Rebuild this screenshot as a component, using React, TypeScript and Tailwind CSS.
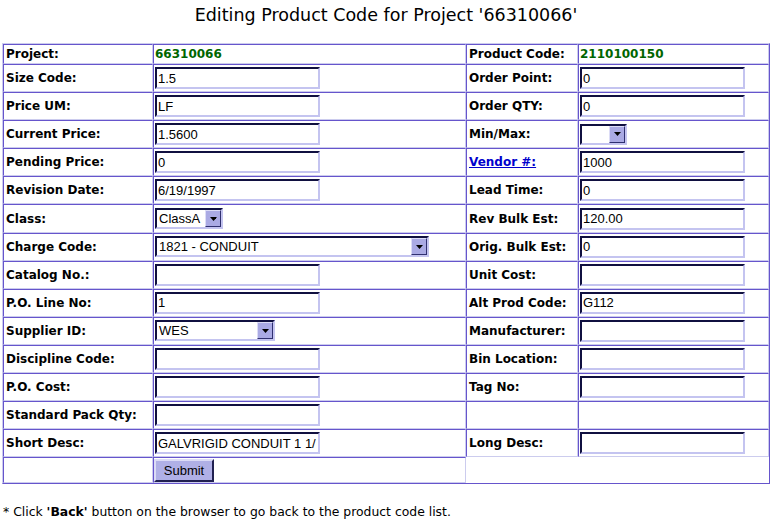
const DARK = 'border-t-[#6655cc] border-l-[#6655cc] border-b-[#ccccee] border-r-[#ccccee]';

type Field =
  | { kind: 'text'; value: string }
  | { kind: 'input'; value: string }
  | { kind: 'select'; value: string; width: string }
  | { kind: 'none' };

type Row = {
  left: string;
  leftField: Field;
  right?: string;
  rightLink?: boolean;
  rightField?: Field;
};

const ROWS: Row[] = [
  { left: 'Project:', leftField: { kind: 'text', value: '66310066' }, right: 'Product Code:', rightField: { kind: 'text', value: '2110100150' } },
  { left: 'Size Code:', leftField: { kind: 'input', value: '1.5' }, right: 'Order Point:', rightField: { kind: 'input', value: '0' } },
  { left: 'Price UM:', leftField: { kind: 'input', value: 'LF' }, right: 'Order QTY:', rightField: { kind: 'input', value: '0' } },
  { left: 'Current Price:', leftField: { kind: 'input', value: '1.5600' }, right: 'Min/Max:', rightField: { kind: 'select', value: '', width: 'w-[47px]' } },
  { left: 'Pending Price:', leftField: { kind: 'input', value: '0' }, right: 'Vendor #:', rightLink: true, rightField: { kind: 'input', value: '1000' } },
  { left: 'Revision Date:', leftField: { kind: 'input', value: '6/19/1997' }, right: 'Lead Time:', rightField: { kind: 'input', value: '0' } },
  { left: 'Class:', leftField: { kind: 'select', value: 'ClassA', width: 'w-[68px]' }, right: 'Rev Bulk Est:', rightField: { kind: 'input', value: '120.00' } },
  { left: 'Charge Code:', leftField: { kind: 'select', value: '1821 - CONDUIT', width: 'w-[274px]' }, right: 'Orig. Bulk Est:', rightField: { kind: 'input', value: '0' } },
  { left: 'Catalog No.:', leftField: { kind: 'input', value: '' }, right: 'Unit Cost:', rightField: { kind: 'input', value: '' } },
  { left: 'P.O. Line No:', leftField: { kind: 'input', value: '1' }, right: 'Alt Prod Code:', rightField: { kind: 'input', value: 'G112' } },
  { left: 'Supplier ID:', leftField: { kind: 'select', value: 'WES', width: 'w-[120px]' }, right: 'Manufacturer:', rightField: { kind: 'input', value: '' } },
  { left: 'Discipline Code:', leftField: { kind: 'input', value: '' }, right: 'Bin Location:', rightField: { kind: 'input', value: '' } },
  { left: 'P.O. Cost:', leftField: { kind: 'input', value: '' }, right: 'Tag No:', rightField: { kind: 'input', value: '' } },
  { left: 'Standard Pack Qty:', leftField: { kind: 'input', value: '' }, right: '', rightField: { kind: 'none' } },
  { left: 'Short Desc:', leftField: { kind: 'input', value: 'GALVRIGID CONDUIT 1 1/' }, right: 'Long Desc:', rightField: { kind: 'input', value: '' } },
];

function TextBox({ value }: { value: string }) {
  return (
    <input
      type="text"
      defaultValue={value}
      className="block w-[165px] h-[22px] px-[1px] border-2 border-t-[#101040] border-l-[#101040] border-b-[#c4c4f0] border-r-[#c4c4f0] bg-white text-[13px] text-black outline-none font-['Liberation_Sans',Arial,sans-serif]"
    />
  );
}

function DropDown({ value, width }: { value: string; width: string }) {
  return (
    <div className={`flex items-center h-[21px] ${width} border-2 border-t-[#101040] border-l-[#101040] border-b-[#c4c4f0] border-r-[#c4c4f0] bg-white`}>
      <span className="flex-1 pl-[2px] text-[13px] leading-none text-black whitespace-nowrap overflow-hidden font-['Liberation_Sans',Arial,sans-serif]">
        {value}
      </span>
      <span className="flex items-center justify-center w-[16px] h-[17px] bg-[#aaaae4] border border-t-[#dcdcf6] border-l-[#dcdcf6] border-b-[#303070] border-r-[#303070]">
        <svg width="7" height="4" viewBox="0 0 7 4">
          <path d="M0 0h7L3.5 4z" fill="#000" />
        </svg>
      </span>
    </div>
  );
}

function renderField(f: Field | undefined) {
  if (!f || f.kind === 'none') return null;
  if (f.kind === 'text') return <span className="font-bold text-[#006600]">{f.value}</span>;
  if (f.kind === 'input') return <TextBox value={f.value} />;
  return <DropDown value={f.value} width={f.width} />;
}

export default function App() {
  return (
    <div className="min-h-screen bg-white text-black font-['DejaVu_Sans',Verdana,sans-serif] pt-[5px] pl-[2px] pr-[2px]">
      <h1 className="text-center text-[17.5px] leading-[20px] font-normal">
        Editing Product Code for Project '66310066'
      </h1>

      <table className="mt-[18px] w-[768px] table-fixed border-separate border-spacing-0 border border-t-[#ccccee] border-l-[#ccccee] border-b-[#6655cc] border-r-[#6655cc] text-[12px]">
        <colgroup>
          <col className="w-[150px]" />
          <col className="w-[313px]" />
          <col className="w-[112px]" />
          <col className="w-[191px]" />
        </colgroup>
        <tbody>
          {ROWS.map((r, i) => {
            const va = i === 0 ? 'align-bottom' : 'align-middle';
            return (
              <tr key={r.left} className={i === 0 ? 'h-[20px]' : 'h-[28.1px]'}>
                <td className={`border ${DARK} px-[2px] py-0 ${va} font-bold whitespace-nowrap`}>{r.left}</td>
                <td className={`border ${DARK} px-[1px] py-0 ${va}`}>{renderField(r.leftField)}</td>
                <td className={`border ${DARK} px-[2px] py-0 ${va} font-bold whitespace-nowrap`}>
                  {r.rightLink ? (
                    <a href="#" className="text-[#0000cc] underline">{r.right}</a>
                  ) : (
                    r.right
                  )}
                </td>
                <td className={`border ${DARK} px-[1px] py-0 ${va}`}>{renderField(r.rightField)}</td>
              </tr>
            );
          })}
          <tr className="h-[26px]">
            <td className={`border ${DARK} p-0`}></td>
            <td className={`border ${DARK} px-0 py-0 align-middle`}>
              <button
                type="button"
                className="block w-[60px] h-[23px] bg-[#b0b0e6] border-2 border-t-[#dcdcf6] border-l-[#dcdcf6] border-b-[#202050] border-r-[#202050] text-[13px] text-black font-['Liberation_Sans',Arial,sans-serif]"
              >
                Submit
              </button>
            </td>
          </tr>
        </tbody>
      </table>

      <p className="mt-[20px] ml-[1px] text-[12.4px] leading-[15px]">
        * Click <b>'Back'</b> button on the browser to go back to the product code list.
      </p>
    </div>
  );
}
